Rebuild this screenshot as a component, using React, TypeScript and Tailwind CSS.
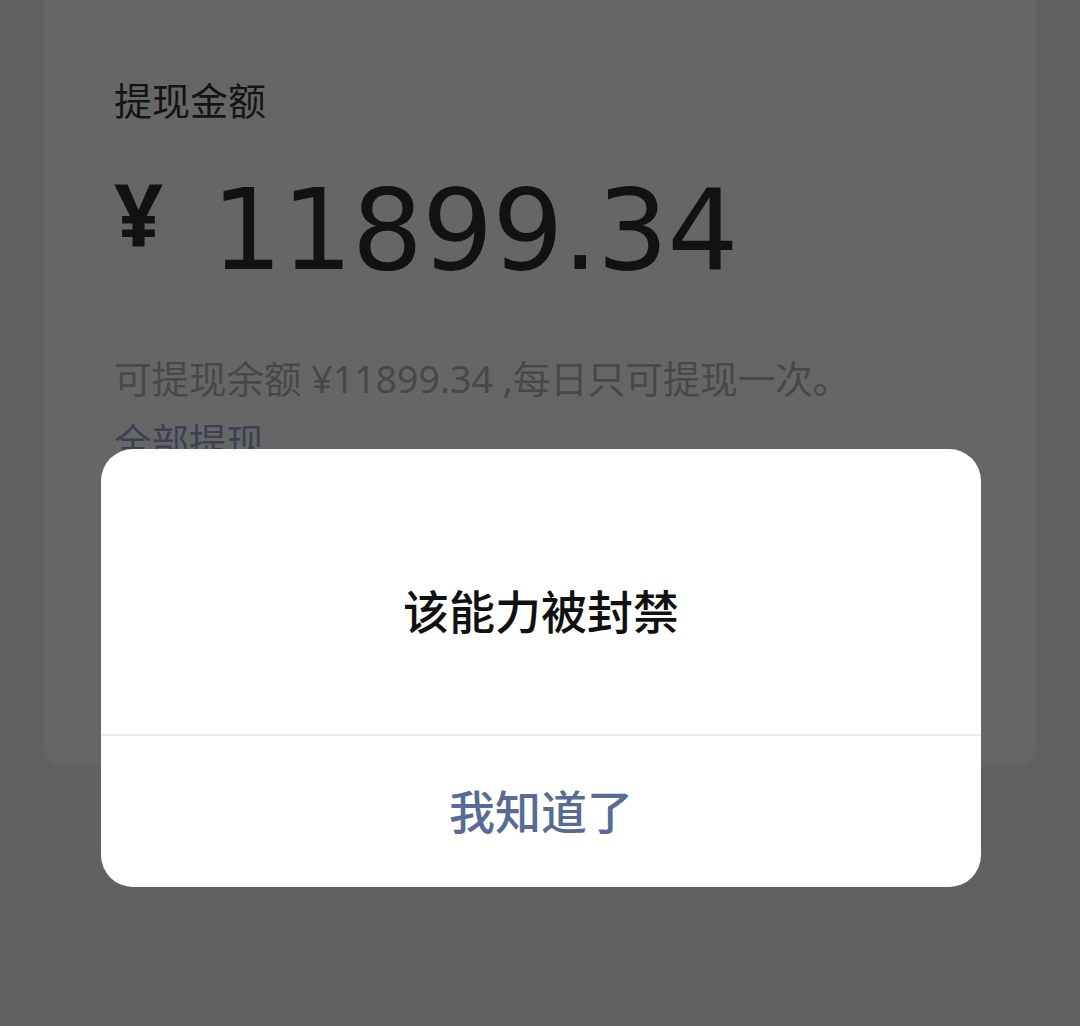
import React from "react";

export default function App() {
  const cjk = { fontFamily: '"Noto Sans", "Noto Sans CJK SC", sans-serif' };
  return (
    <div className="relative h-[1026px] w-[1080px] overflow-hidden bg-[#616161]" style={cjk}>
      <div className="ml-[44px] h-[765px] w-[992px] rounded-b-[18px] bg-[#666666] pl-[70px] pr-[66px]">
        <div className="pt-[78px] text-[38px] leading-[1.2] text-[#141414]">提现金额</div>
        <div className="mt-[50px] flex items-start gap-[48px]">
          <span className="mt-[-4px] text-[86px] font-bold leading-none text-[#121212]">¥</span>
          <span
            className="text-[112px] leading-none tracking-[-1px] text-[#121212]"
            style={{ fontFamily: '"DejaVu Sans", sans-serif' }}
          >
            11899.34
          </span>
        </div>
        <div className="mt-[32px] h-px bg-[#6b6b6b]" />
        <div className="mt-[37px] text-[37.5px] leading-[1.2] text-[#484848]">
          可提现余额 ¥11899.34 ,每日只可提现一次。
        </div>
        <div className="mt-[18px] text-[37.5px] leading-[1.2] text-[#3b4150]">全部提现</div>
      </div>

      <div className="absolute left-[101px] top-[449px] flex h-[438px] w-[880px] flex-col overflow-hidden rounded-[32px] bg-white">
        <div className="flex h-[285px] items-center justify-center pt-[40px] text-[46px] font-medium text-[#111111]">
          该能力被封禁
        </div>
        <div className="h-[2px] bg-[#ececec]" />
        <div className="flex flex-1 items-center justify-center text-[46px] font-medium text-[#576b95]">
          我知道了
        </div>
      </div>
    </div>
  );
}
